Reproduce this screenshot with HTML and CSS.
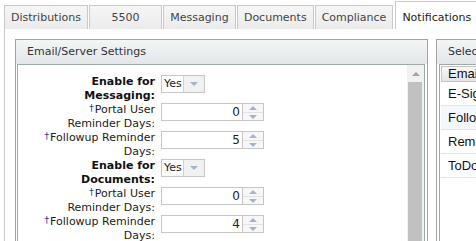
FILE: index.html
```html
<!DOCTYPE html>
<html>
<head>
<meta charset="utf-8">
<link rel="stylesheet" href="styles.css">
</head>
<body>
<div class="page">
  <div class="tabs">
    <div class="tab">Distributions</div>
    <div class="tab">5500</div>
    <div class="tab">Messaging</div>
    <div class="tab">Documents</div>
    <div class="tab">Compliance</div>
    <div class="tab active">Notifications</div>
  </div>
  <div class="tab-body">
    <section class="panel settings">
      <div class="panel-header">Email/Server Settings</div>
      <div class="panel-body">
        <div class="form">
          <div class="lbl bold">Enable for Messaging:</div>
          <div class="select"><span class="val">Yes</span><span class="drop"></span></div>

          <div class="lbl"><span class="req">†</span>Portal User Reminder Days:</div>
          <div class="spin"><span class="num">0</span><span class="btns"><span class="up"></span><span class="down"></span></span></div>

          <div class="lbl"><span class="req">†</span>Followup Reminder Days:</div>
          <div class="spin"><span class="num">5</span><span class="btns"><span class="up"></span><span class="down"></span></span></div>

          <div class="lbl bold">Enable for Documents:</div>
          <div class="select"><span class="val">Yes</span><span class="drop"></span></div>

          <div class="lbl"><span class="req">†</span>Portal User Reminder Days:</div>
          <div class="spin"><span class="num">0</span><span class="btns"><span class="up"></span><span class="down"></span></span></div>

          <div class="lbl"><span class="req">†</span>Followup Reminder Days:</div>
          <div class="spin"><span class="num">4</span><span class="btns"><span class="up"></span><span class="down"></span></span></div>
        </div>
        <div class="scrollbar"><div class="sb-up"></div><div class="sb-thumb"></div></div>
      </div>
    </section>
    <section class="panel selected">
      <div class="panel-header">Select Notifications</div>
      <div class="panel-body">
        <div class="grid">
          <div class="grid-head">Email Type</div>
          <div class="grid-row">E-Signature</div>
          <div class="grid-row alt">Followup Reminder</div>
          <div class="grid-row">Reminder</div>
          <div class="grid-row">ToDo</div>
        </div>
      </div>
    </section>
  </div>
</div>
</body>
</html>
```
FILE: styles.css
```css
html, body {
  margin: 0;
  padding: 0;
}
body {
  width: 476px;
  height: 241px;
  overflow: hidden;
  background: #fff;
  font-family: "DejaVu Sans", Verdana, sans-serif;
  font-size: 11px;
  color: #222;
}
.page {
  width: 700px;
  padding-left: 4px;
}
.tabs {
  display: flex;
  align-items: flex-end;
  gap: 1px;
  height: 29px;
}
.tab {
  box-sizing: border-box;
  height: 24px;
  min-width: 73px;
  padding: 0 6px;
  border: 1px solid #c9c9c9;
  border-bottom: none;
  background: linear-gradient(#f6f6f6, #ebebeb);
  color: #444;
  line-height: 23px;
  text-align: center;
  white-space: nowrap;
}
.tab.active {
  height: 28px;
  margin-left: 1px;
  padding-top: 4px;
  background: #fff;
  color: #1c1c1c;
}
.tab-body {
  display: flex;
  gap: 8px;
  height: 212px;
  padding: 10px 0 0 10px;
  border-left: 1px solid #c9c9c9;
}
.panel {
  box-sizing: border-box;
  border: 1px solid #a3a3a3;
  border-bottom: none;
  display: flex;
  flex-direction: column;
}
.settings {
  width: 413px;
}
.selected {
  width: 220px;
}
.panel-header {
  height: 24px;
  line-height: 24px;
  padding-left: 11px;
  background: linear-gradient(#f3f5f6, #e3e7e9);
  color: #333;
  white-space: nowrap;
}
.panel-body {
  flex: 1;
  display: flex;
  margin: 0 2px 0 1px;
  border: 1px solid #9fabab;
  border-bottom: none;
}
.selected .panel-body {
  margin: 0 1px 0 2px;
}
.form {
  flex: 1;
  display: grid;
  grid-template-columns: 116px auto;
  grid-auto-rows: 28px;
  column-gap: 6px;
  align-content: start;
  align-items: start;
  padding: 10px 0 0 21px;
}
.lbl {
  text-align: right;
  line-height: 14px;
  color: #222;
}
.lbl.bold {
  font-weight: bold;
  color: #111;
}
.req {
  display: inline-block;
  font-size: 9px;
  line-height: 9px;
  color: #1d3b86;
  vertical-align: top;
  margin-top: 1px;
  margin-right: 1px;
}
.select {
  box-sizing: border-box;
  display: flex;
  width: 44px;
  height: 18px;
  border: 1px solid #c6c6c6;
  background: #fff;
}
.select .val {
  flex: 1;
  padding-left: 2px;
  line-height: 16px;
  font-size: 11px;
}
.select .drop {
  position: relative;
  width: 20px;
  border-left: 1px solid #d2d2d2;
  background: #f1f1f1;
}
.select .drop::after {
  content: "";
  position: absolute;
  left: 6px;
  top: 6px;
  border-left: 4px solid transparent;
  border-right: 4px solid transparent;
  border-top: 4px solid #a7b3c7;
}
.spin {
  display: flex;
  height: 18px;
}
.spin .num {
  box-sizing: border-box;
  width: 82px;
  height: 18px;
  border: 1px solid #c6c6c6;
  padding-right: 2px;
  text-align: right;
  line-height: 16px;
  font-size: 12px;
}
.spin .btns {
  box-sizing: border-box;
  width: 21px;
  height: 18px;
  display: flex;
  flex-direction: column;
  border: 1px solid #c6c6c6;
  border-left: none;
  background: #f7f7f7;
}
.btns .up,
.btns .down {
  position: relative;
  flex: 1;
}
.btns .up {
  border-bottom: 1px solid #e2e2e2;
}
.btns .up::after,
.btns .down::after {
  content: "";
  position: absolute;
  left: 6px;
  border-left: 4px solid transparent;
  border-right: 4px solid transparent;
}
.btns .up::after {
  top: 2px;
  border-bottom: 4px solid #a3b3cb;
}
.btns .down::after {
  top: 2px;
  border-top: 4px solid #a3b3cb;
}
.scrollbar {
  width: 17px;
  display: flex;
  flex-direction: column;
  background: #f1f1f1;
}
.sb-up {
  position: relative;
  height: 17px;
}
.sb-up::after {
  content: "";
  position: absolute;
  left: 5px;
  top: 7px;
  border-left: 4px solid transparent;
  border-right: 4px solid transparent;
  border-bottom: 4px solid #a3a3a3;
}
.sb-thumb {
  flex: 1;
  margin: 0 2px 0 1px;
  background: #c1c1c1;
}
.grid {
  flex: 1;
  padding: 1px 1px 0 1px;
  font-family: "Liberation Sans", Arial, sans-serif;
  font-size: 13px;
  color: #111;
}
.grid-head {
  box-sizing: border-box;
  height: 16px;
  line-height: 14px;
  padding-left: 6px;
  border: 1px solid #c4c4c4;
  background: linear-gradient(#f8f8f8, #e4e4e4);
  white-space: nowrap;
}
.grid-row {
  height: 23px;
  line-height: 23px;
  padding-left: 7px;
  border-bottom: 1px solid #e3e3e3;
  white-space: nowrap;
}
.grid-row:first-of-type {
  margin-top: 2px;
}
.grid-row.alt {
  background: #f4f8fd;
}
```
